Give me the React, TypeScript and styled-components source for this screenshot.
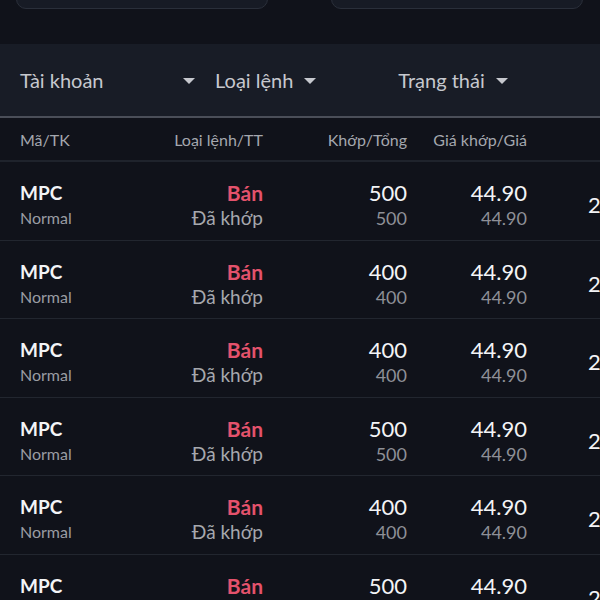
import styled, { createGlobalStyle } from 'styled-components';

const GlobalStyle = createGlobalStyle`
  html, body {
    margin: 0;
    padding: 0;
    background: #10121a;
  }
  body {
    font-family: Lato, "Noto Sans", sans-serif;
    overflow: hidden;
  }
`;

const Screen = styled.div`
  width: 600px;
  height: 600px;
  overflow: hidden;
  background: #10121a;
`;

const TopArea = styled.div`
  height: 44px;
  display: flex;
  align-items: flex-end;
  justify-content: space-between;
  padding: 0 17px 0 16px;
  overflow: hidden;
`;

const InputBox = styled.div`
  width: 250px;
  height: 40px;
  margin-bottom: 35px;
  background: #171b25;
  border: 1px solid #2a2f3a;
  border-radius: 10px;
`;

const FilterBar = styled.div`
  height: 72px;
  display: flex;
  align-items: center;
  padding-left: 20px;
  background: #181c26;
  border-bottom: 2px solid #4a4e58;
`;

const Filter = styled.div<{ $width?: number; $gap?: number }>`
  width: ${(p) => (p.$width ? `${p.$width}px` : 'auto')};
  margin-right: ${(p) => p.$gap ?? 0}px;
  display: flex;
  align-items: center;
  justify-content: ${(p) => (p.$width ? 'space-between' : 'flex-start')};
  gap: 11px;
  color: #c6c8ce;
  font-size: 20px;
  white-space: nowrap;
`;

const Caret = styled.span`
  width: 0;
  height: 0;
  border-left: 6px solid transparent;
  border-right: 6px solid transparent;
  border-top: 6px solid #c6c8ce;
  margin-top: 2px;
`;

const Grid = styled.div`
  display: grid;
  grid-template-columns: 150px 93px 144px 120px 1fr;
  padding-left: 20px;
`;

const HeaderRow = styled(Grid)`
  height: 42px;
  align-items: center;
  border-bottom: 2px solid #1f232c;
  color: #a4a7ae;
  font-size: 16px;
`;

const HeadCell = styled.div<{ $right?: boolean }>`
  text-align: ${(p) => (p.$right ? 'right' : 'left')};
  white-space: nowrap;
`;

const Row = styled(Grid)`
  box-sizing: border-box;
  height: 78.6px;
  padding-top: 19px;
  border-bottom: 1px solid #22262f;
`;

const Cell = styled.div<{ $right?: boolean; $pad?: number; $drop?: number }>`
  display: flex;
  flex-direction: column;
  align-items: ${(p) => (p.$right ? 'flex-end' : 'flex-start')};
  padding-left: ${(p) => p.$pad ?? 0}px;
  padding-top: ${(p) => p.$drop ?? 0}px;
  white-space: nowrap;
`;

const Main = styled.div<{ $tone?: 'sell' | 'plain'; $bold?: boolean; $size?: number }>`
  line-height: 24px;
  font-size: ${(p) => p.$size ?? 22}px;
  font-weight: ${(p) => (p.$bold ? 700 : 400)};
  color: ${(p) => (p.$tone === 'sell' ? '#e4526c' : '#f3f4f6')};
`;

const Sub = styled.div<{ $size?: number; $color?: string }>`
  line-height: 26px;
  font-size: ${(p) => p.$size ?? 18}px;
  color: ${(p) => p.$color ?? '#979aa2'};
`;

type Order = { matched: number; total: number; price: string; avg: string };

const orders: Order[] = [
  { matched: 500, total: 500, price: '44.90', avg: '44.90' },
  { matched: 400, total: 400, price: '44.90', avg: '44.90' },
  { matched: 400, total: 400, price: '44.90', avg: '44.90' },
  { matched: 500, total: 500, price: '44.90', avg: '44.90' },
  { matched: 400, total: 400, price: '44.90', avg: '44.90' },
  { matched: 500, total: 500, price: '44.90', avg: '44.90' },
];

export default function App() {
  return (
    <Screen>
      <GlobalStyle />
      <TopArea>
        <InputBox />
        <InputBox />
      </TopArea>
      <FilterBar>
        <Filter $width={175} $gap={20}>
          Tài khoản <Caret />
        </Filter>
        <Filter $gap={82}>
          Loại lệnh <Caret />
        </Filter>
        <Filter>
          Trạng thái <Caret />
        </Filter>
      </FilterBar>
      <HeaderRow>
        <HeadCell>Mã/TK</HeadCell>
        <HeadCell $right>Loại lệnh/TT</HeadCell>
        <HeadCell $right>Khớp/Tổng</HeadCell>
        <HeadCell $right>Giá khớp/Giá</HeadCell>
        <HeadCell />
      </HeaderRow>
      {orders.map((o, i) => (
        <Row key={i}>
          <Cell>
            <Main $bold $size={19}>MPC</Main>
            <Sub $size={16} $color="#9a9ca3">Normal</Sub>
          </Cell>
          <Cell $right>
            <Main $bold $size={21} $tone="sell">Bán</Main>
            <Sub $size={19} $color="#a6a8ae">Đã khớp</Sub>
          </Cell>
          <Cell $right>
            <Main>{o.matched}</Main>
            <Sub $color="#8e9097">{o.total}</Sub>
          </Cell>
          <Cell $right>
            <Main>{o.price}</Main>
            <Sub $color="#8e9097">{o.avg}</Sub>
          </Cell>
          <Cell $pad={61} $drop={12}>
            <Main>2</Main>
          </Cell>
        </Row>
      ))}
    </Screen>
  );
}
